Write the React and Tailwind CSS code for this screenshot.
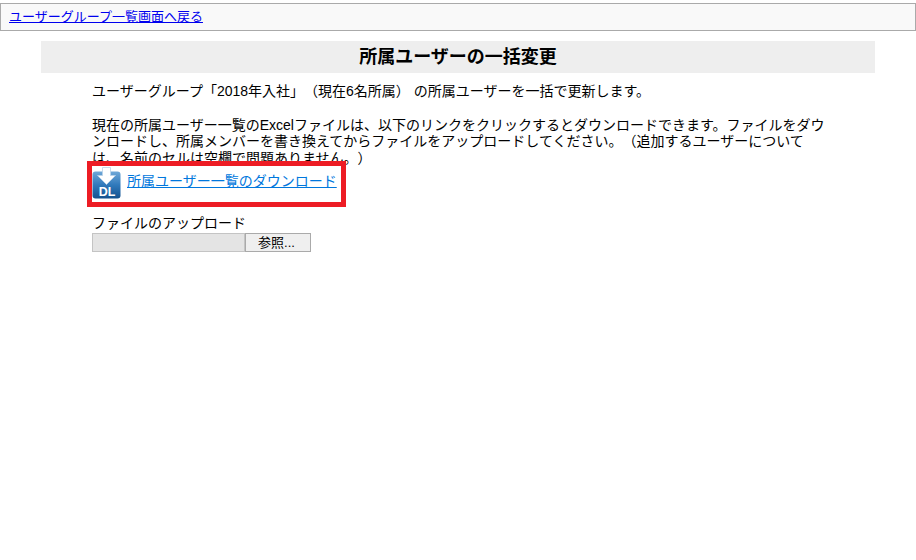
const font = "font-['Liberation_Sans','Noto_Sans_CJK_JP',sans-serif]"

const DownloadIcon = () => (
  <svg width="29" height="32" viewBox="0 0 29 32" className="block shrink-0">
    <defs>
      <linearGradient id="dlBlue" x1="0" y1="0" x2="0" y2="1">
        <stop offset="0" stopColor="#6fa8d8" />
        <stop offset="0.5" stopColor="#3079bb" />
        <stop offset="1" stopColor="#15528f" />
      </linearGradient>
    </defs>
    <rect x="0.5" y="4.500" width="28" height="27" rx="3" fill="url(#dlBlue)" />
    <path d="M10.500 0.500h8v8h5L14.500 17.500 5.500 8.500h5z" fill="#fff" stroke="#b9d2e8" strokeWidth="0.8" />
    <text x="15" y="29" textAnchor="middle" fontSize="12.500" fontWeight="700" fill="#fff" fontFamily="'Liberation Sans', sans-serif">DL</text>
  </svg>
)

const App = () => {
  return (
    <div className={`${font} min-h-[560px] bg-white pt-[3px] text-[14px] leading-[16.8px] text-black [text-spacing-trim:space-all]`}>
      {/* back link */}
      <div className="h-7 border border-[#aaaaaa] bg-[#f9f9f9] pl-2 text-[13px] leading-[26px]">
        <a href="#" className="text-[#0000ee] underline">ユーザーグループ一覧画面へ戻る</a>
      </div>

      <div className="mx-[41px] mt-[10px]">
        <h1 className="h-8 bg-[#eeeeee] text-center text-[18px] font-bold leading-8">所属ユーザーの一括変更</h1>

        <div className="mt-[10px] w-[736px] pl-[51px] box-content">
          <p>ユーザーグループ「2018年入社」（現在6名所属） の所属ユーザーを一括で更新します。</p>
          <p className="mt-[16.8px]">
            現在の所属ユーザー一覧のExcelファイルは、以下のリンクをクリックするとダウンロードできます。ファイルをダウンロードし、所属メンバーを書き換えてからファイルをアップロードしてください。（追加するユーザーについては、名前のセルは空欄で問題ありません。）
          </p>

          <div className="relative flex h-[32px] items-center gap-[6px]">
            <DownloadIcon />
            <a href="#" className="-mt-[3px] text-[#0077dd] underline">所属ユーザー一覧のダウンロード</a>
            {/* red annotation frame */}
            <div className="absolute left-[-5px] top-[-6px] h-[46px] w-[259px] border-[5px] border-[#ed1c24]" />
          </div>

          <div className="mt-[16px]">ファイルのアップロード</div>
          <div className="mt-[1px] flex h-[19px]">
            <div className="w-[153px] border border-[#c4c4c4] bg-[#e4e4e4]" />
            <button className="w-[66px] border border-[#aaaaaa] bg-[#efefef] pr-[3px] text-center text-[13px] leading-[15px]">参照...</button>
          </div>
        </div>
      </div>
    </div>
  )
}

export default App
